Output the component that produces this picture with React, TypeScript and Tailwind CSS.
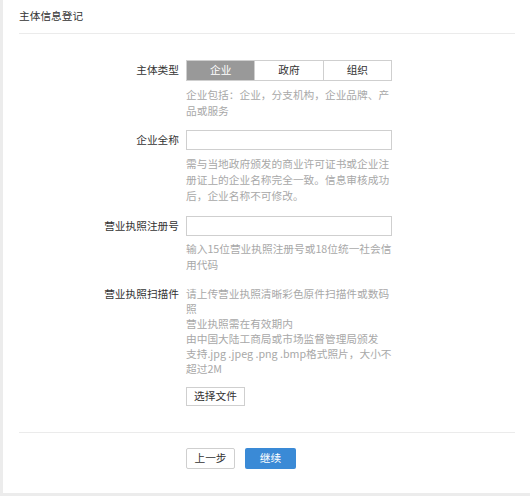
import { useState } from "react";

const font = { fontFamily: '"Noto Sans CJK SC", "Microsoft YaHei", sans-serif' };

// --- label + control row ---
const FormRow = ({ label, children, top = false, className = "" }: { label: string; children: React.ReactNode; top?: boolean; className?: string }) => (
  <div className={`flex gap-[7px] ${className}`}>
    <div className={`w-[176px] shrink-0 flex justify-end text-[#333] ${top ? "leading-[15px]" : "h-[20px] items-center"}`}>
      {label}
    </div>
    <div className="w-[206px]">{children}</div>
  </div>
);

const Hint = ({ children, className = "" }: { children: React.ReactNode; className?: string }) => (
  <p className={`text-[#a8a8a8] leading-[16px] ${className}`}>{children}</p>
);

export default function App() {
  const [type, setType] = useState("企业");
  const types = ["企业", "政府", "组织"];

  return (
    <div style={font} className="w-[530px] h-[496px] bg-white border-l-[3px] border-b-[3px] border-[#ececec] text-[10.7px] overflow-hidden">
      {/* header */}
      <div className="ml-[16px] mr-[15px] h-[34px] flex items-center border-b border-[#ebebeb] text-[#333] text-[10.7px]">
        主体信息登记
      </div>

      <div className="pt-[26px]">
        {/* 主体类型 */}
        <FormRow label="主体类型">
          <div className="flex h-[21px] border border-[#cfcfcf]">
            {types.map((t, i) => (
              <button
                key={t}
                onClick={() => setType(t)}
                className={`flex-1 flex items-center justify-center ${i > 0 ? "border-l border-[#cfcfcf]" : ""} ${type === t ? "bg-[#999] text-white" : "bg-white text-[#333]"}`}
              >
                {t}
              </button>
            ))}
          </div>
          <Hint className="mt-[6px]">企业包括：企业，分支机构，企业品牌、产品或服务</Hint>
        </FormRow>

        {/* 企业全称 */}
        <FormRow label="企业全称" className="mt-[11px]">
          <input className="block w-full h-[20px] border border-[#cfcfcf] outline-none px-1" />
          <Hint className="mt-[6px]">需与当地政府颁发的商业许可证书或企业注册证上的企业名称完全一致。信息审核成功后，企业名称不可修改。</Hint>
        </FormRow>

        {/* 营业执照注册号 */}
        <FormRow label="营业执照注册号" className="mt-[12px]">
          <input className="block w-full h-[20px] border border-[#cfcfcf] outline-none px-1" />
          <Hint className="mt-[5px]">输入15位营业执照注册号或18位统一社会信用代码</Hint>
        </FormRow>

        {/* 营业执照扫描件 */}
        <FormRow label="营业执照扫描件" top className="mt-[13px]">
          <div className="text-[#a8a8a8] leading-[15px]">
            <p>请上传营业执照清晰彩色原件扫描件或数码照</p>
            <p>营业执照需在有效期内</p>
            <p>由中国大陆工商局或市场监督管理局颁发</p>
            <p>支持.jpg .jpeg .png .bmp格式照片，大小不超过2M</p>
          </div>
          <button className="mt-[11px] h-[19px] w-[59px] border border-[#cfcfcf] bg-white text-[#333] flex items-center justify-center">
            选择文件
          </button>
        </FormRow>
      </div>

      {/* footer */}
      <div className="ml-[16px] mr-[15px] mt-[26px] border-t border-[#ebebeb]" />
      <div className="flex gap-[10px] pl-[183px] mt-[15px]">
        <button className="h-[21px] w-[49px] border border-[#cfcfcf] rounded-[2px] bg-white text-[#333] flex items-center justify-center">上一步</button>
        <button className="h-[21px] w-[51px] rounded-[2px] bg-[#3a8ad6] text-white flex items-center justify-center">继续</button>
      </div>
    </div>
  );
}
